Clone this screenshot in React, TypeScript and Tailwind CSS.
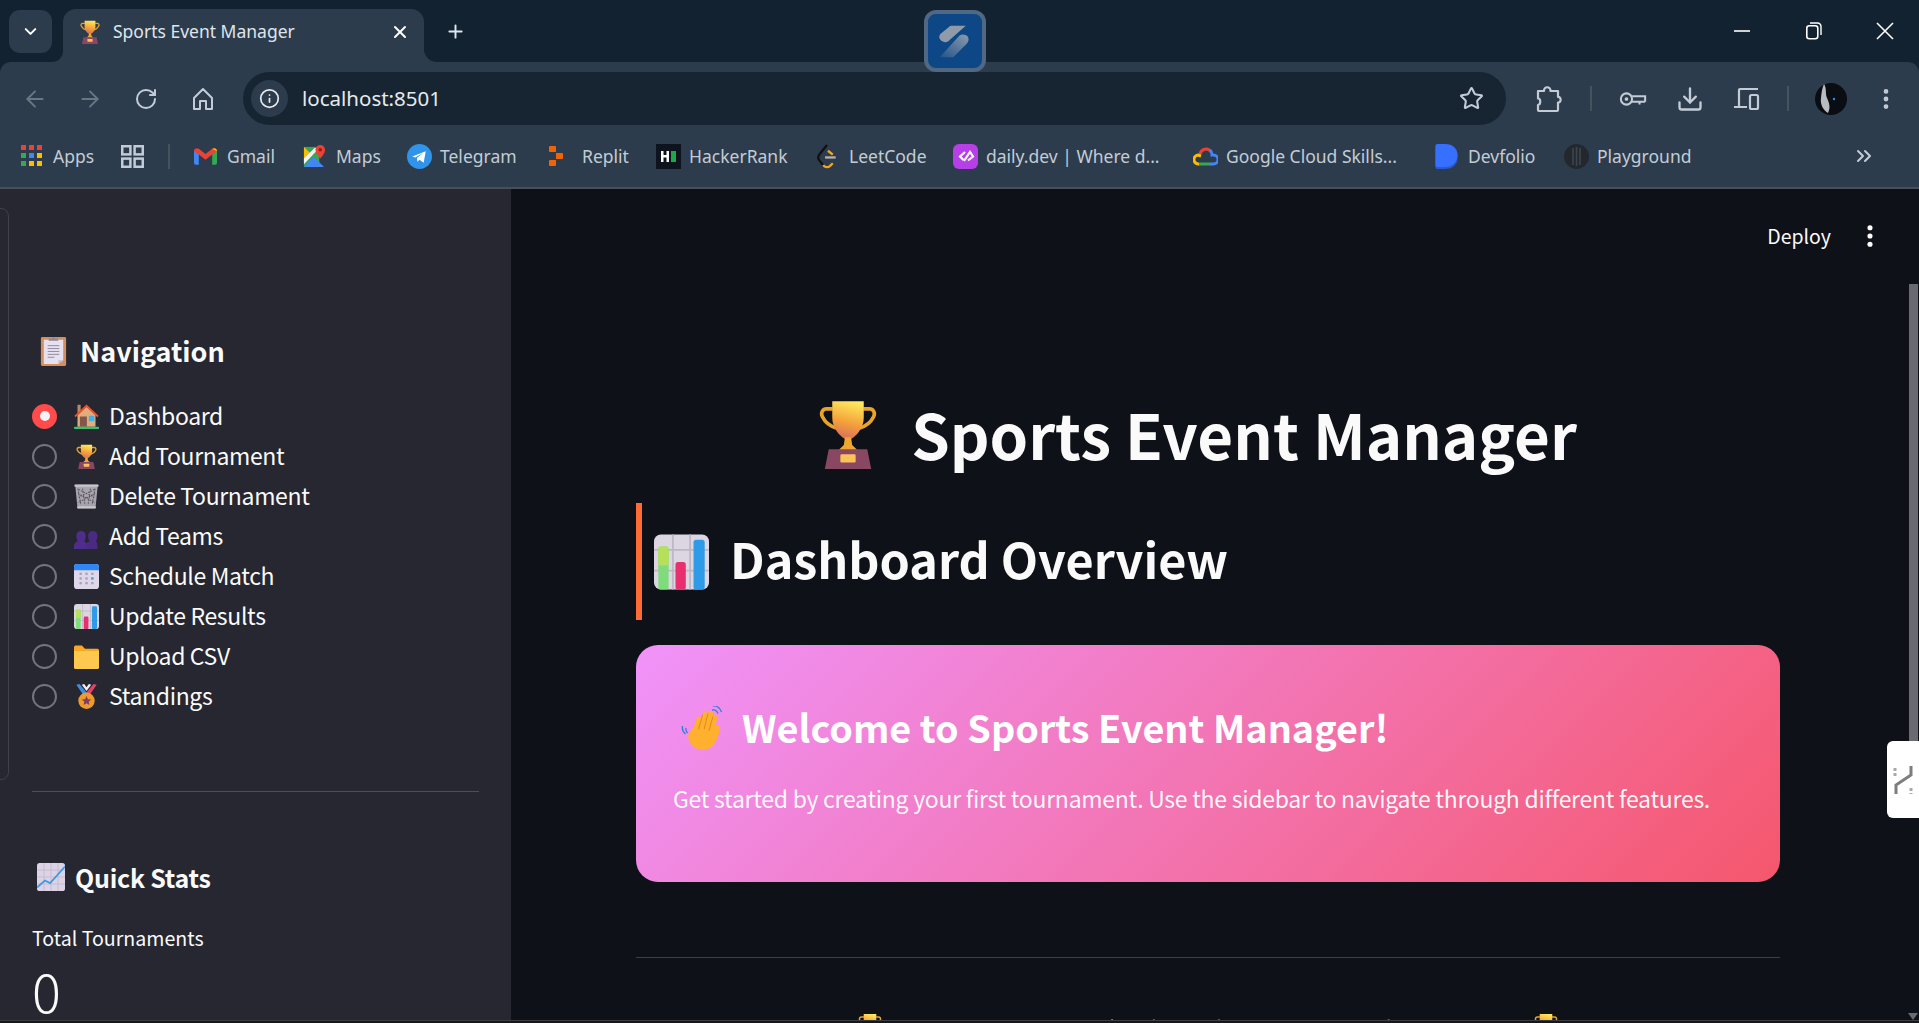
import React from "react";
import { ArrowLeft, ArrowRight, ChevronDown, ChevronsRight, Download, Info, MoreVertical, Plus, RotateCw, Star, X } from "lucide-react";

const SANS = "font-['Noto_Sans_CJK_SC','Source_Sans_Pro',sans-serif]";

function Trophy({ className = "" }: { className?: string }) {
  return (
    <svg viewBox="3 0 26 32" className={className}>
      <defs>
        <linearGradient id="cup" x1="0.6" y1="0" x2="0.4" y2="1">
          <stop offset="0" stopColor="#ffe95e" />
          <stop offset="0.55" stopColor="#f5a33a" />
          <stop offset="1" stopColor="#d9705a" />
        </linearGradient>
      </defs>
      <path d="M9 4.500H6.200c-1.800 0-2.800 1.800-1.900 3.600C5.600 10.700 7.800 12.400 10.600 13.200M23 4.500h2.800c1.800 0 2.800 1.800 1.900 3.600-1.300 2.600-3.500 4.300-6.300 5.100" fill="none" stroke="#e8a32c" strokeWidth="1.700" />
      <path d="M8.800 1h14.400v7.500c0 4.600-3.200 8.400-5.700 9.700h-3c-2.500-1.300-5.700-5.100-5.700-9.700z" fill="url(#cup)" />
      <path d="M14.600 17.500h2.800l.5 3.500 2.600 2.500H11.500l2.600-2.500z" fill="#f0a62f" />
      <path d="M7.200 23h17.600l1.800 9H5.400z" fill="#8a4762" />
      <rect x="12.500" y="25.300" width="7" height="3.700" rx="0.600" fill="#fbc25a" />
    </svg>
  );
}

function BarChart({ className = "" }: { className?: string }) {
  return (
    <svg viewBox="0 0 32 32" className={className}>
      <rect width="32" height="32" rx="4" fill="#dcd6e2" />
      <path d="M0 9h32M0 21h32M11 0v32M21 0v32" stroke="#bdb6c6" strokeWidth="1" />
      <rect x="2.500" y="7" width="6" height="25" rx="1.500" fill="#7fdc7a" />
      <rect x="2.500" y="7" width="6" height="11" rx="1.500" fill="#b6e05a" />
      <rect x="12.500" y="16" width="6" height="16" rx="1.500" fill="#e8306f" />
      <rect x="23" y="3" width="6.500" height="29" rx="1.500" fill="#2f9ae8" />
    </svg>
  );
}

function Clipboard({ className = "" }: { className?: string }) {
  return (
    <svg viewBox="0 0 32 32" className={className}>
      <rect x="3" y="2" width="26" height="30" rx="1.500" fill="#d3905c" />
      <path d="M6 5h20v21l-5 4H6z" fill="#e6e0ef" />
      <path d="M26 26l-5 4v-4z" fill="#c3bcd0" />
      <path d="M10 11h12M10 14h12M10 17h12M10 20h12M10 23h7" stroke="#8f8a9c" strokeWidth="1" />
      <path d="M11 6V3.500h3.500C14.800 1.500 17.200 1.500 17.500 3.500H21V6z" fill="#8f8898" />
    </svg>
  );
}

function House({ className = "" }: { className?: string }) {
  return (
    <svg viewBox="0 0 32 32" className={className}>
      <rect x="4.500" y="1" width="4" height="12" fill="#b98a66" />
      <path d="M4.500 14L16 3l11.500 11v15H4.500z" fill="#e0ae7c" />
      <path d="M0.500 15L16 0.500 31.500 15l-1.500 1.800L16 4 2 16.800z" fill="#e5532f" />
      <rect x="7.500" y="16" width="9" height="13" fill="#84574c" />
      <rect x="19" y="15" width="7" height="7" fill="#3fb0ee" />
      <rect y="29" width="32" height="3" rx="1" fill="#3bbf6e" />
    </svg>
  );
}

function Basket({ className = "" }: { className?: string }) {
  return (
    <svg viewBox="0 0 32 32" className={className}>
      <path d="M1.500 1h29l-3 30h-23z" fill="#a9a5af" />
      <rect x="0.500" y="0.500" width="31" height="3" rx="1" fill="#c9c5cf" />
      <path d="M5 6l4 21M11 6l3 21M21 6l-3 21M27 6l-4 21M5 12l22 12M27 12L5 24M6 7l20 10M26 7L6 17" stroke="#57535f" strokeWidth="1.300" strokeDasharray="2 1.500" fill="none" />
      <rect x="4" y="28.500" width="24" height="3" rx="1" fill="#c9c5cf" />
    </svg>
  );
}

function Busts({ className = "" }: { className?: string }) {
  return (
    <svg viewBox="0 0 32 32" className={className}>
      <path d="M0 32v-4c0-3 2-5 5-6-1.500-2-2-4-2-7 0-4 2.500-6 6-6s6 2 6 6c0 3-.5 5-2 7 3 1 4 3 4 6v4z" fill="#4f2d8c" />
      <path d="M15 32v-4c0-3 2-5 5-6-1.500-2-2-4-2-7 0-4 2.500-6 6-6s6 2 6 6c0 3-.5 5-2 7 1 .5 2 3 2 6v4z" fill="#4b2a83" />
    </svg>
  );
}

function Calendar({ className = "" }: { className?: string }) {
  return (
    <svg viewBox="0 0 32 32" className={className}>
      <rect width="32" height="32" rx="4" fill="#dfd8ea" />
      <path d="M0 8V4a4 4 0 014-4h24a4 4 0 014 4v4z" fill="#2f86f5" />
      <g fill="#a8a2b4">
        <rect x="7" y="11" width="3" height="3" /><rect x="14.500" y="11" width="3" height="3" /><rect x="22" y="11" width="3" height="3" />
        <rect x="7" y="17" width="3" height="3" /><rect x="14.500" y="17" width="3" height="3" />
        <rect x="7" y="23" width="3" height="3" /><rect x="14.500" y="23" width="3" height="3" /><rect x="22" y="23" width="3" height="3" />
      </g>
      <rect x="22" y="17" width="3" height="3" fill="#2f9ae8" />
    </svg>
  );
}

function Folder({ className = "" }: { className?: string }) {
  return (
    <svg viewBox="0 0 32 32" className={className}>
      <path d="M0 4a2 2 0 012-2h8l4 4h16a2 2 0 012 2v6H0z" fill="#f7a925" />
      <path d="M0 9h32v21a2 2 0 01-2 2H2a2 2 0 01-2-2z" fill="#ffc94f" />
    </svg>
  );
}

function Medal({ className = "" }: { className?: string }) {
  return (
    <svg viewBox="0 0 32 32" className={className}>
      <path d="M3 1l9 13 4-3L7 0z" fill="#3f8fe0" />
      <path d="M29 1l-9 13-4-3L25 0z" fill="#e8406a" />
      <path d="M10 1l6 8 6-8-3-1-3 4-3-4z" fill="#f1eef5" />
      <circle cx="16" cy="21.500" r="10.500" fill="#f09a2c" />
      <path d="M16 15.500l1.800 3.900 4.200.4-3.200 2.800 1 4.200-3.800-2.300-3.800 2.300 1-4.200-3.200-2.800 4.200-.4z" fill="#7d3f62" />
    </svg>
  );
}

function TrendChart({ className = "" }: { className?: string }) {
  return (
    <svg viewBox="0 0 32 32" className={className}>
      <rect width="32" height="32" rx="3" fill="#dcd3e6" />
      <path d="M0 8h32M0 16h32M0 24h32M8 0v32M16 0v32M24 0v32" stroke="#c4bace" strokeWidth="1" />
      <path d="M0 28l9-8 6 3L32 4" fill="none" stroke="#3d9ae6" strokeWidth="2" />
    </svg>
  );
}

function Wave({ className = "" }: { className?: string }) {
  return (
    <svg viewBox="0 0 46 44" className={className}>
      <g transform="rotate(10 23 24)">
        <path d="M12 40C6 32 9 28 12 24l2-11c.5-2 3.500-2 4 0l1-5c.5-2.500 4-2.500 4.500 0L24 6c.5-2.500 4.500-2.500 5 0l1 3c1-2 4-1.500 4 1l-.5 8c1-2 5-1.500 5 2 0 6-1 13-4 18-5 7-16 8-22.500 2z" fill="#ffb02e" />
        <path d="M19 9l-1.500 15M24 7l-1 16M29.500 9L28 24" stroke="#e68a1c" strokeWidth="1" fill="none" />
      </g>
      <path d="M31 4c2.500-.5 5 1 6 3.500M32 0c4-.5 7 2 8.500 6" stroke="#2f7fd6" strokeWidth="1.300" fill="none" />
      <path d="M1.500 20c-.5 3 .5 6 3 8M5 22c-.5 2 .3 3.500 1.500 5" stroke="#2f7fd6" strokeWidth="1.300" fill="none" />
    </svg>
  );
}

function MapsIcon() {
  return (
    <svg viewBox="0 0 24 24" className="w-[23px] h-[25px]">
      <path d="M1 2h16v21H1z" fill="#34a853" />
      <path d="M1 23l10-11 11 11z" fill="#4285f4" />
      <path d="M1 2l8 8-8 8z" fill="#fbbc04" />
      <path d="M1 14L12 3h5L1 20z" fill="#f1f3f4" />
      <path d="M18 0a5 5 0 015 5c0 4-5 9-5 9s-5-5-5-9a5 5 0 015-5z" fill="#ea4335" />
      <circle cx="18" cy="5" r="1.800" fill="#8c1d18" />
    </svg>
  );
}

const bookmarks = [
  {
    label: "Gmail",
    box: "w-[109px]",
    icon: (
      <svg viewBox="0 0 24 18" className="w-[23px] h-[18px]">
        <path d="M0 3v13a2 2 0 002 2h3V7z" fill="#4285f4" />
        <path d="M24 3v13a2 2 0 01-2 2h-3V7z" fill="#34a853" />
        <path d="M0 4l5 3.500L12 13l7-5.500L24 4C24 1 21 0 19 1.500L12 7 5 1.500C3 0 0 1 0 4z" fill="#ea4335" />
        <path d="M19 1.500L24 4c0-3-3-4-5-2.500z" fill="#fbbc04" />
      </svg>
    ),
  },
  { label: "Maps", box: "w-[104px]", icon: <MapsIcon /> },
  {
    label: "Telegram",
    box: "w-[142px]",
    icon: (
      <svg viewBox="0 0 24 24" className="w-[25px] h-[25px]">
        <circle cx="12" cy="12" r="12" fill="#2f94ea" />
        <path d="M5 12l13-5-2 11-4-3-2 2-.5-3.500 6-5-7.500 4.500z" fill="#fff" />
      </svg>
    ),
  },
  {
    label: "Replit",
    box: "w-[107px]",
    icon: (
      <svg viewBox="0 0 14 20" className="w-[14px] h-[20px]">
        <path d="M0 1a1 1 0 011-1h5a1 1 0 011 1v5H1a1 1 0 01-1-1zM7 7h6a1 1 0 011 1v4a1 1 0 01-1 1H7zM0 15a1 1 0 011-1h6v5a1 1 0 01-1 1H1a1 1 0 01-1-1z" fill="#f26207" />
      </svg>
    ),
  },
  {
    label: "HackerRank",
    box: "w-[160px]",
    icon: (
      <svg viewBox="0 0 25 25" className="w-[25px] h-[25px]">
        <rect width="25" height="25" fill="#0e141e" />
        <path d="M5 7h2.500v4h3V7H13v11h-2.500v-4.500h-3V18H5z" fill="#fff" />
        <rect x="15" y="7" width="5" height="11" fill="#1ba94c" />
      </svg>
    ),
  },
  {
    label: "LeetCode",
    box: "w-[137px]",
    icon: (
      <svg viewBox="0 0 22 26" className="w-[22px] h-[25px]">
        <path d="M11 1L3 11c-1.500 2-1.500 4 0 6l4 5" fill="none" stroke="#111" strokeWidth="2.400" />
        <path d="M12 7l5 4M7 22c2 2.500 5 2.500 7 1l3-3" fill="none" stroke="#f5a623" strokeWidth="2.400" />
        <path d="M9 14h11" stroke="#b3b3b3" strokeWidth="2.400" />
      </svg>
    ),
  },
  {
    label: "daily.dev | Where d...",
    box: "w-[240px]",
    icon: (
      <svg viewBox="0 0 25 25" className="w-[25px] h-[25px]">
        <rect width="25" height="25" rx="6" fill="#b63fe8" />
        <path d="M12 8l-5 4.500 3.500 3.500M11 17l6-9 3 4.500-5 4" fill="none" stroke="#fff" strokeWidth="2.200" />
      </svg>
    ),
  },
  {
    label: "Google Cloud Skills...",
    box: "w-[242px]",
    icon: (
      <svg viewBox="0 0 25 20" className="w-[25px] h-[20px]">
        <path d="M7 8a6 6 0 0111-2" fill="none" stroke="#ea4335" strokeWidth="3" />
        <path d="M17 4a6 6 0 012 5h1.500a3.500 3.500 0 010 9H17" fill="none" stroke="#4285f4" strokeWidth="3" />
        <path d="M6 18h11" stroke="#34a853" strokeWidth="3" />
        <path d="M6 18a4.500 4.500 0 01-1-9l3 1" fill="none" stroke="#fbbc04" strokeWidth="3" />
      </svg>
    ),
  },
  {
    label: "Devfolio",
    box: "w-[129px]",
    icon: (
      <svg viewBox="0 0 23 26" className="w-[23px] h-[25px]">
        <path d="M0 2h10c8 0 13 5 13 12s-5 12-13 12H2a2 2 0 01-2-2z" fill="#2a5ad0" />
        <path d="M0 2a2 2 0 012-2h8c8 0 13 5 13 11.500S18 24 10 24H2a2 2 0 01-2-2z" fill="#3770ff" />
      </svg>
    ),
  },
  {
    label: "Playground",
    box: "w-[140px]",
    icon: (
      <svg viewBox="0 0 25 25" className="w-[25px] h-[25px]">
        <circle cx="12.500" cy="12.500" r="12.500" fill="#23282f" />
        <path d="M9 4v17M12.500 3v19M16 4v17" stroke="#3d4650" strokeWidth="1.600" />
      </svg>
    ),
  },
];

const navItems: { label: string; Icon: React.ComponentType<{ className?: string }> }[] = [
  { label: "Dashboard", Icon: House },
  { label: "Add Tournament", Icon: Trophy },
  { label: "Delete Tournament", Icon: Basket },
  { label: "Add Teams", Icon: Busts },
  { label: "Schedule Match", Icon: Calendar },
  { label: "Update Results", Icon: BarChart },
  { label: "Upload CSV", Icon: Folder },
  { label: "Standings", Icon: Medal },
];

function BrowserChrome() {
  return (
    <div className="relative h-[189px] shrink-0 bg-[#132230] text-[#c3ccd6] font-['Noto_Sans',sans-serif]">
      {/* tab strip */}
      <div className="h-[62px] flex items-end pl-[9px]">
        <div className="self-start mt-[10px] w-[43px] h-[43px] rounded-[11px] bg-[#2d3c4c] flex items-center justify-center">
          <ChevronDown className="w-[19px] h-[19px] text-white" strokeWidth={2.5} />
        </div>
        <div className="relative ml-[11px] w-[361px] h-[53px] rounded-t-[13px] bg-[#2d3c4c] flex items-center pb-[8px] pl-[17px]">
          <div className="absolute -left-[11px] bottom-0 w-[11px] h-[11px] bg-[#2d3c4c]">
            <div className="w-full h-full rounded-br-[11px] bg-[#132230]" />
          </div>
          <div className="absolute -right-[13px] bottom-0 w-[13px] h-[13px] bg-[#2d3c4c]">
            <div className="w-full h-full rounded-bl-[13px] bg-[#132230]" />
          </div>
          <Trophy className="w-[20px] h-[24px]" />
          <span className="ml-[13px] text-[17.500px] leading-none text-[#dfe5eb]">Sports Event Manager</span>
          <X className="absolute left-[327px] top-[13px] w-[20px] h-[20px] text-white" strokeWidth={2.4} />
        </div>
        <Plus className="self-start mt-[21px] ml-[21px] w-[21px] h-[21px] text-[#dfe5eb]" strokeWidth={2.2} />
        <div className="ml-auto self-start flex items-center h-[62px]">
          <svg viewBox="0 0 16 16" className="w-[16px] h-[16px] mr-[56px]"><path d="M0 8h16" stroke="#fff" strokeWidth="1.600" /></svg>
          <svg viewBox="0 0 16 18" className="w-[16px] h-[18px] mr-[54px]">
            <rect x="0.800" y="3.800" width="11" height="13" rx="2.500" fill="none" stroke="#fff" strokeWidth="1.600" />
            <path d="M4 1h7.500a3.500 3.500 0 013.500 3.500V13" fill="none" stroke="#fff" strokeWidth="1.400" />
          </svg>
          <svg viewBox="0 0 18 18" className="w-[18px] h-[18px] mr-[25px]"><path d="M1 1l16 16M17 1L1 17" stroke="#fff" strokeWidth="1.600" /></svg>
        </div>
      </div>

      {/* toolbar + bookmarks */}
      <div className="h-[125px] rounded-t-[11px] bg-[#2d3c4c]">
        <div className="h-[63px] pt-[10px] flex items-start">
          <div className="h-[53px] flex items-center pl-[22px]">
            <ArrowLeft className="w-[26px] h-[26px] text-[#6a7683]" strokeWidth={1.8} />
            <ArrowRight className="ml-[29px] w-[26px] h-[26px] text-[#6a7683]" strokeWidth={1.8} />
            <RotateCw className="ml-[31px] w-[24px] h-[24px] text-[#c3ccd6]" strokeWidth={2} />
            <svg viewBox="0 0 24 24" className="ml-[33px] w-[24px] h-[26px]">
              <path d="M3 11l9-9 9 9v11h-6v-8H9v8H3z" fill="none" stroke="#c3ccd6" strokeWidth="2" strokeLinejoin="round" />
            </svg>
          </div>
          <div className="ml-[28px] w-[1263px] h-[53px] rounded-full bg-[#172533] flex items-center pl-[8px] pr-[22px]">
            <div className="w-[37px] h-[37px] rounded-full bg-[#2d3c4c] flex items-center justify-center">
              <Info className="w-[21px] h-[21px] text-[#e5eaee]" strokeWidth={2} />
            </div>
            <span className="ml-[14px] text-[20.500px] leading-none text-[#e5eaee]">localhost:8501</span>
            <Star className="ml-auto w-[25px] h-[25px] text-[#c3ccd6]" strokeWidth={2} />
          </div>
          <div className="h-[53px] flex items-center">
            <svg viewBox="0 0 26 28" className="ml-[30px] w-[26px] h-[28px]">
              <path d="M2 6h6c-.5-5 7-5 6.500 0H22v6c3.500-.5 3.500 6 0 5.500V25a1 1 0 01-1 1H3a1 1 0 01-1-1v-5c3-.5 3-6.500 0-6.500z" fill="none" stroke="#c3ccd6" strokeWidth="2.200" strokeLinejoin="round" />
            </svg>
            <div className="ml-[28px] w-[2px] h-[25px] bg-[#46535f]" />
            <svg viewBox="0 0 30 20" className="ml-[27px] w-[28px] h-[20px]">
              <circle cx="8" cy="10" r="6" fill="none" stroke="#c3ccd6" strokeWidth="2.200" />
              <circle cx="8" cy="10" r="2" fill="#c3ccd6" />
              <path d="M14 7h14v6M22 13v3M14 13h14" fill="none" stroke="#c3ccd6" strokeWidth="2.200" />
            </svg>
            <Download className="ml-[29px] w-[28px] h-[28px] text-[#c3ccd6]" strokeWidth={2} />
            <svg viewBox="0 0 26 24" className="ml-[30px] w-[26px] h-[24px]">
              <path d="M5 19V3a1 1 0 011-1h18M0 20h13" fill="none" stroke="#c3ccd6" strokeWidth="2.200" />
              <rect x="16" y="8" width="8" height="14" rx="1.500" fill="none" stroke="#c3ccd6" strokeWidth="2.200" />
            </svg>
            <div className="ml-[27px] w-[2px] h-[25px] bg-[#46535f]" />
            <svg viewBox="0 0 32 32" className="ml-[26px] w-[32px] h-[32px]">
              <circle cx="16" cy="16" r="16" fill="#0a0d12" />
              <path d="M9 1c3 5 1 9 3 14s4 9 1 15c-5-3-8-9-7-15 .5-5 1-10 3-14z" fill="#b9bcc0" />
              <circle cx="19" cy="16" r="1.200" fill="#2b8cff" />
            </svg>
            <MoreVertical className="ml-[26px] w-[26px] h-[26px] text-[#c3ccd6]" strokeWidth={2.4} />
          </div>
        </div>

        <div className={"h-[62px] flex items-center pl-[21px] text-[17.500px] leading-none"}>
          <div className="w-[100px] flex items-center">
            <svg viewBox="0 0 21 22" className="w-[21px] h-[22px] mr-[11px]">
              <path d="M0 0h5v5H0z" fill="#ea4335" /><path d="M8 0h5v5H8z" fill="#ea4335" /><path d="M16 0h5v5h-5z" fill="#ea4335" />
              <path d="M0 8h5v5H0z" fill="#34a853" /><path d="M8 8h5v5H8z" fill="#4285f4" /><path d="M16 8h5v5h-5z" fill="#fbbc04" />
              <path d="M0 16h5v5H0z" fill="#34a853" /><path d="M8 16h5v5H8z" fill="#fbbc04" /><path d="M16 16h5v5h-5z" fill="#fbbc04" />
            </svg>
            <span className="translate-y-px">Apps</span>
          </div>
          <svg viewBox="0 0 24 24" className="w-[23px] h-[23px]">
            <g fill="none" stroke="#c3ccd6" strokeWidth="2.600">
              <rect x="1.300" y="1.300" width="8.500" height="8.500" /><rect x="14.200" y="1.300" width="8.500" height="8.500" />
              <rect x="1.300" y="14.200" width="8.500" height="8.500" /><rect x="14.200" y="14.200" width="8.500" height="8.500" />
            </g>
          </svg>
          <div className="ml-[24px] mr-[24px] w-[2px] h-[25px] bg-[#46535f]" />
          {bookmarks.map((b) => (
            <div key={b.label} className={"flex items-center shrink-0 " + b.box}>
              <div className="w-[33px] flex items-center shrink-0">{b.icon}</div>
              <span className="whitespace-nowrap translate-y-px">{b.label}</span>
            </div>
          ))}
          <ChevronsRight className="ml-[148px] w-[24px] h-[24px] text-[#c3ccd6]" strokeWidth={2} />
        </div>
      </div>
      <div className="h-[2px] bg-[#4a4f57]" />

      {/* window-switch thumbnail over the chrome */}
      <div className="absolute left-[924px] top-[10px] w-[62px] h-[62px] rounded-[12px] border-[4px] border-[#6d7682]/70 bg-[#0d4785] flex items-center justify-center">
        <svg viewBox="0 0 40 40" className="w-[36px] h-[36px]">
          <defs>
            <linearGradient id="sfade" x1="1" y1="0" x2="0" y2="1">
              <stop offset="0" stopColor="#8d9bab" />
              <stop offset="1" stopColor="#8d9bab" stopOpacity="0.150" />
            </linearGradient>
          </defs>
          <path d="M4 19c-2-2-2-5 0-7L15 3h17L14 19c-2 3-7 3-10 0z" fill="#8d9bab" />
          <path d="M25 14c3-2 7-1 9 1 2 3 1 6-1 8L18 38H3z" fill="url(#sfade)" />
        </svg>
      </div>
    </div>
  );
}

function Sidebar() {
  return (
    <aside className="relative w-[511px] shrink-0 h-full overflow-hidden bg-[#262730] text-[#fafafa]">
      {/* collapsed panel edge */}
      <div className="absolute -left-[12px] top-[19px] w-[21px] h-[572px] rounded-[8px] border border-[#3f4049]" />

      <div className="pt-[142px] pl-[38px] h-[180px] flex items-center gap-[11px]">
        <Clipboard className="w-[31px] h-[31px]" />
        <h2 className="text-[27px] leading-none font-semibold">Navigation</h2>
      </div>

      <div className="mt-[27px] pl-[32px]">
        {navItems.map(({ label, Icon }, i) => (
          <div key={label} className="h-[40px] flex items-center">
            {i === 0 ? (
              <div className="w-[25px] h-[25px] rounded-full bg-[#ff4b4b] flex items-center justify-center">
                <div className="w-[10px] h-[10px] rounded-full bg-[#f3f3f6]" />
              </div>
            ) : (
              <div className="w-[25px] h-[25px] rounded-full border-[2px] border-[#74757c]" />
            )}
            <Icon className="ml-[17px] w-[25px] h-[25px]" />
            <span className="ml-[10px] text-[23px] leading-none tracking-[-0.35px] -translate-y-px">{label}</span>
          </div>
        ))}
      </div>

      <div className="mt-[75px] mx-[32px] h-px bg-[#4d4e56]" />

      <div className="mt-[65px] pl-[37px] h-[40px] flex items-center gap-[10px]">
        <TrendChart className="w-[28px] h-[28px]" />
        <h3 className="text-[25px] leading-none font-semibold tracking-[-0.25px]">Quick Stats</h3>
      </div>
      <div className="mt-[27px] pl-[32px] text-[19.600px] leading-[28px]">Total Tournaments</div>
      <div className="mt-[8px] pl-[32px] text-[54px] leading-[60px] font-light">0</div>
    </aside>
  );
}

function MainPanel() {
  return (
    <main className="relative flex-1 h-full overflow-hidden bg-[#0e1117] text-[#fafafa]">
      <div className="h-[94px] flex items-center justify-end pr-[88px]">
        <span className="text-[19.500px] leading-none">Deploy</span>
      </div>
      <svg viewBox="0 0 6 24" className="absolute left-[1356px] top-[36px] w-[6px] h-[22px]">
        <circle cx="3" cy="3" r="2.800" fill="#fff" /><circle cx="3" cy="12" r="2.800" fill="#fff" /><circle cx="3" cy="21" r="2.800" fill="#fff" />
      </svg>

      <div className="ml-[125px] w-[1144px]">
        <div className="mt-[103px] h-[100px] flex items-center justify-center pr-[20px]">
          <Trophy className="w-[58px] h-[70px] -translate-y-[2px]" />
          <h1 className="ml-[34px] text-[61.800px] leading-none font-bold whitespace-nowrap -translate-y-[2px]">Sports Event Manager</h1>
        </div>

        <div className="mt-[17px] h-[117px] border-l-[6px] border-[#ff6b35] flex items-center pl-[12px]">
          <BarChart className="w-[55px] h-[56px]" />
          <h2 className="ml-[21px] text-[48.500px] leading-none font-semibold whitespace-nowrap -translate-y-[3px]">Dashboard Overview</h2>
        </div>

        <div className="mt-[25px] h-[237px] rounded-[22px] bg-[linear-gradient(135deg,#f093fb_0%,#f5576c_100%)] pl-[38px] pt-[61px] text-white">
          <div className="flex items-center h-[44px]">
            <Wave className="ml-[7px] w-[46px] h-[44px]" />
            <h3 className="ml-[15px] text-[37.800px] leading-none font-semibold whitespace-nowrap -translate-y-px">Welcome to Sports Event Manager!</h3>
          </div>
          <p className="mt-[33px] -ml-px text-[23px] leading-[30px] tracking-[-0.27px] whitespace-nowrap text-white/95">
            Get started by creating your first tournament. Use the sidebar to navigate through different features.
          </p>
        </div>

        <div className="mt-[75px] h-px bg-[#3d3f45]" />

        {/* footer line, only its tip shows above the window edge */}
        <div className="mt-[55px] flex items-start justify-center gap-[14px] text-[20.500px] leading-[28px] text-[#9a9ca3] whitespace-nowrap">
          <Trophy className="w-[24px] h-[28px]" />
          <span>Sports Event Manager | Built with love using Streamlit and Python</span>
          <Trophy className="w-[24px] h-[28px]" />
        </div>
      </div>

      {/* scrollbar */}
      <div className="absolute right-[1px] top-[95px] w-[9px] h-[470px] bg-[#6a6b70]" />
      <div className="absolute right-[1px] bottom-[0px] w-0 h-0 border-x-[5px] border-t-[7px] border-x-transparent border-t-[#6a6b70]" />

      {/* floating extension tab */}
      <div className="absolute right-0 top-[552px] w-[32px] h-[77px] rounded-l-[6px] bg-white flex items-center justify-center">
        <svg viewBox="0 0 20 32" className="w-[20px] h-[32px]">
          <path d="M18 2v9L3 21v9" fill="none" stroke="#7d7d7d" strokeWidth="3" />
          <path d="M2 4v8M18 24v6" stroke="#a9a9a9" strokeWidth="3" strokeDasharray="3 2" />
        </svg>
      </div>
    </main>
  );
}

export default function App() {
  return (
    <div className={"w-[1919px] h-[1023px] overflow-hidden flex flex-col bg-[#0e1117] " + SANS}>
      <BrowserChrome />
      <div className="h-[831px] shrink-0 flex overflow-hidden">
        <Sidebar />
        <MainPanel />
      </div>
      <div className="flex-1 border-t border-[#3c3e42] bg-[#15171c]" />
    </div>
  );
}
